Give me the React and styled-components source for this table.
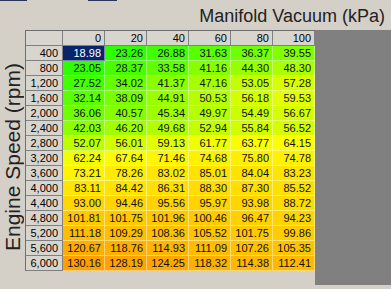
import React from "react";
import styled, { createGlobalStyle } from "styled-components";

const GlobalStyle = createGlobalStyle`
	html, body {
		margin: 0;
		padding: 0;
		background: #d4d0c8;
	}
`;

const columns = [0, 20, 40, 60, 80, 100];

const rows = [
	["400", [18.98, 23.26, 26.88, 31.63, 36.37, 39.55]],
	["800", [23.05, 28.37, 33.58, 41.16, 44.3, 48.3]],
	["1,200", [27.52, 34.02, 41.37, 47.16, 53.05, 57.28]],
	["1,600", [32.14, 38.09, 44.91, 50.53, 56.18, 59.53]],
	["2,000", [36.06, 40.57, 45.34, 49.97, 54.49, 56.67]],
	["2,400", [42.03, 46.2, 49.68, 52.94, 55.84, 56.52]],
	["2,800", [52.07, 56.01, 59.13, 61.77, 63.77, 64.15]],
	["3,200", [62.24, 67.64, 71.46, 74.68, 75.8, 74.78]],
	["3,600", [73.21, 78.26, 83.02, 85.01, 84.04, 83.23]],
	["4,000", [83.11, 84.42, 86.31, 88.3, 87.3, 85.52]],
	["4,400", [93.0, 94.46, 95.56, 95.97, 93.98, 88.72]],
	["4,800", [101.81, 101.75, 101.96, 100.46, 96.47, 94.23]],
	["5,200", [111.18, 109.29, 108.36, 105.52, 101.75, 99.86]],
	["5,600", [120.67, 118.76, 114.93, 111.09, 107.26, 105.35]],
	["6,000", [130.16, 128.19, 124.25, 118.32, 114.38, 112.41]],
];

// green -> yellow -> orange, like the tuner's colour scale
const cellColour = (v) => {
	let r = 255;
	let g = 255;
	if (v < 65) {
		r = Math.max(0, Math.min(255, 30 + ((v - 20) / 45) * 225));
	} else {
		g = Math.max(150, 255 - ((v - 65) / 65) * 95);
	}
	return `rgb(${Math.round(r)}, ${Math.round(g)}, 0)`;
};

const Page = styled.div`
	width: 391px;
	height: 289px;
	overflow: hidden;
	background: #d4d0c8;
	display: flex;
	flex-direction: column;
`;

const TopStrip = styled.div`
	height: 2px;
	display: flex;
`;

const TabEdge = styled.div`
	width: ${(p) => p.$w}px;
	margin-left: ${(p) => p.$offset || 0}px;
	height: 1px;
	background: #2c3456;
`;

const TitleRow = styled.div`
	height: 28px;
	display: flex;
	align-items: center;
	justify-content: flex-end;
	padding-right: 6px;
	font-family: "Liberation Sans", Arial, sans-serif;
	font-size: 18px;
	color: #222;
`;

const Body = styled.div`
	display: flex;
	align-items: flex-start;
`;

const AxisLabel = styled.div`
	width: 25px;
	height: 255px;
	display: flex;
	align-items: center;
	justify-content: center;
	writing-mode: vertical-rl;
	transform: rotate(180deg);
	font-family: "Liberation Sans", Arial, sans-serif;
	font-size: 21px;
	color: #222;
	white-space: nowrap;
`;

const Table = styled.div`
	display: grid;
	grid-template-columns: 37px repeat(6, 42px);
	grid-auto-rows: 15px;
	font-family: "Liberation Sans", Arial, sans-serif;
	font-size: 11px;
	border-left: 1px solid #6e6e6e;
	border-top: 1px solid #6e6e6e;
	box-sizing: border-box;
`;

const Cell = styled.div`
	box-sizing: border-box;
	display: flex;
	align-items: center;
	justify-content: flex-end;
	padding-right: 3px;
	line-height: 1;
	white-space: nowrap;
`;

const HeadCell = styled(Cell)`
	background: #d8d5ce;
	color: #000;
	border-right: 1px solid #808080;
	border-bottom: 1px solid #808080;
	padding-right: ${(p) => (p.$row ? 4 : 3)}px;
`;

const DataCell = styled(Cell)`
	color: ${(p) => (p.$selected ? "#fff" : "#111")};
	background: ${(p) => (p.$selected ? "#0a246a" : p.$bg)};
	border-right: 1px solid rgba(255, 255, 255, 0.45);
	border-bottom: 1px solid rgba(255, 255, 255, 0.45);
`;

const Filler = styled.div`
	flex: 1;
	height: 255px;
	background: #808080;
`;

const fmt = (v) => v.toFixed(2);

const App = () => {
	return (
		<>
			<GlobalStyle />
			<Page>
				<TopStrip>
					<TabEdge $w={27} />
					<TabEdge $w={29} $offset={61} />
				</TopStrip>
				<TitleRow>Manifold Vacuum (kPa)</TitleRow>
				<Body>
					<AxisLabel>Engine Speed (rpm)</AxisLabel>
					<Table>
						<HeadCell $row />
						{columns.map((c) => (
							<HeadCell key={c}>{c}</HeadCell>
						))}
						{rows.map(([rpm, values], ri) => (
							<React.Fragment key={rpm}>
								<HeadCell $row>{rpm}</HeadCell>
								{values.map((v, ci) => (
									<DataCell
										key={ci}
										$selected={ri === 0 && ci === 0}
										$bg={cellColour(v)}
									>
										{fmt(v)}
									</DataCell>
								))}
							</React.Fragment>
						))}
					</Table>
					<Filler />
				</Body>
			</Page>
		</>
	);
};

export default App;
